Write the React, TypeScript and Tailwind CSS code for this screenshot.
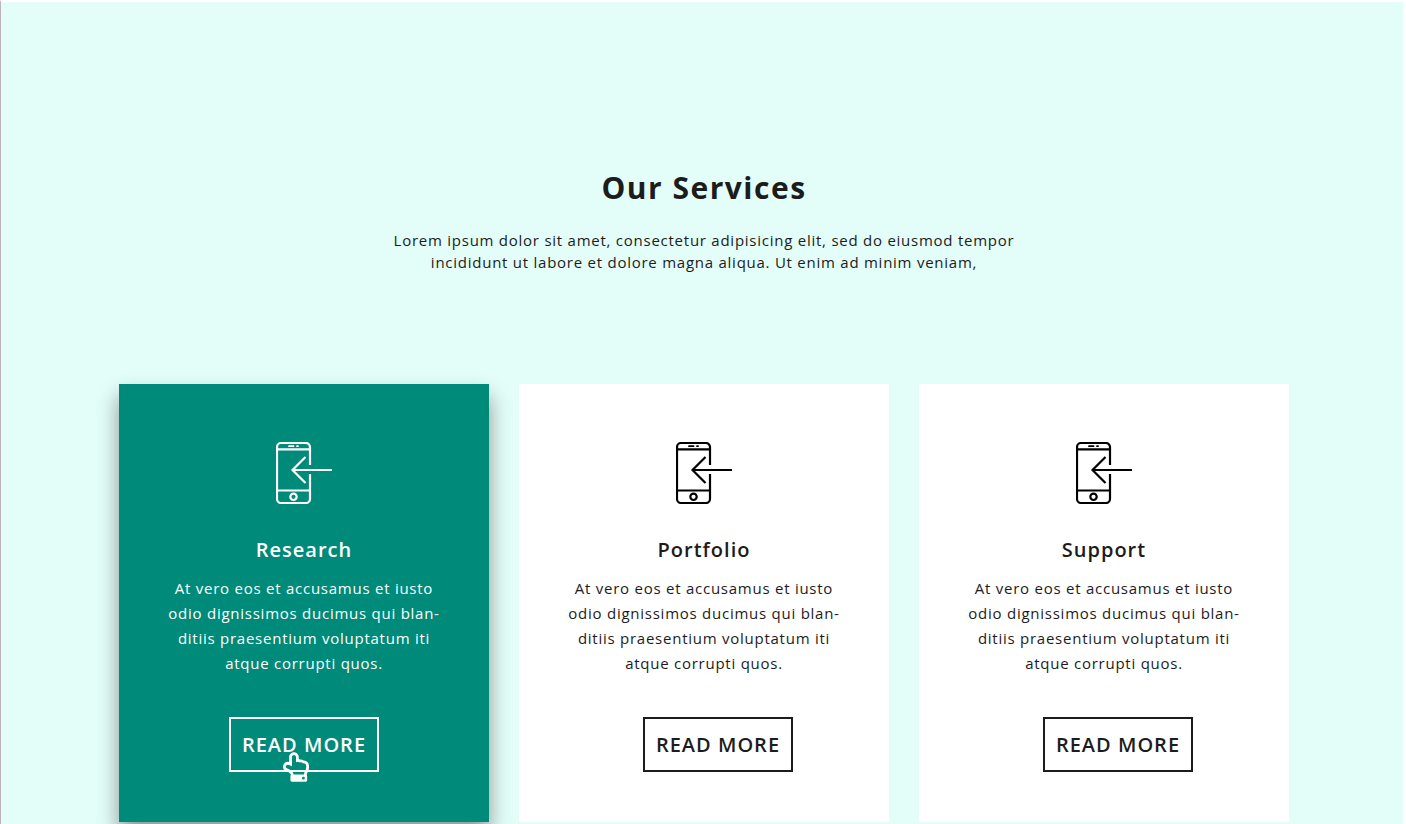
import { FaRegHandPointUp } from "react-icons/fa";

type Service = { title: string; active?: boolean };

const services: Service[] = [
  { title: "Research", active: true },
  { title: "Portfolio" },
  { title: "Support" },
];

function PhoneIcon() {
  return (
    <svg
      viewBox="0 0 56 62"
      className="h-[62px] w-14"
      fill="none"
      stroke="currentColor"
      strokeWidth="2.2"
      aria-hidden="true"
    >
      <path d="M34 23V5a4 4 0 0 0-4-4H5a4 4 0 0 0-4 4v52a4 4 0 0 0 4 4h25a4 4 0 0 0 4-4V32" />
      <path d="M1 7.300h33M1 48.500h33" />
      <path d="M13 4.200h4.500M21 4.200h1" strokeWidth="1.800" strokeLinecap="round" />
      <circle cx="17.500" cy="54.800" r="3.200" />
      <path d="M56 28H17M29.500 15 16.500 28l13 13" />
    </svg>
  );
}

function ServiceCard({ title, active }: Service) {
  return (
    <article
      className={
        active
          ? "flex flex-col items-center bg-[#008a7a] px-10 pt-[58px] pb-[50px] text-white shadow-[0_12px_20px_rgba(0,0,0,0.4)]"
          : "flex flex-col items-center bg-white px-10 pt-[58px] pb-[50px] text-[#1c1c1c]"
      }
    >
      <div className={active ? "text-white" : "text-black"}>
        <PhoneIcon />
      </div>
      <h2 className="mt-8 text-[20px] leading-7 font-semibold tracking-wider">{title}</h2>
      <p className="mt-3 text-center text-[15px] leading-[25px] tracking-wider">
        At vero eos et accusamus et iusto
        <br />
        odio dignissimos ducimus qui blan-
        <br />
        ditiis praesentium voluptatum iti
        <br />
        atque corrupti quos.
      </p>
      <div className={active ? "relative mt-[41px]" : "relative mt-[41px] ml-7"}>
        <button
          type="button"
          className="h-[55px] w-[150px] cursor-pointer border-2 border-current text-[20px] font-semibold tracking-wider whitespace-nowrap"
        >
          READ MORE
        </button>
        {active && (
          <FaRegHandPointUp
            className="pointer-events-none absolute top-[35px] left-[54px] h-[30px] w-[26px]"
            aria-hidden="true"
          />
        )}
      </div>
    </article>
  );
}

export default function App() {
  return (
    <div className="min-h-screen border-t-2 border-r-[3px] border-l border-t-white border-r-white border-l-[#bdb3b9] bg-[#e3fdf8] font-['Open_Sans',sans-serif] text-[#1c1c1c]">
      <section className="mx-auto max-w-[1174px] pt-[164px] pl-1">
        <header className="text-center">
          <h1 className="text-[30px] leading-[43px] font-bold tracking-wider">Our Services</h1>
          <p className="mt-5 text-[15px] leading-[22px] tracking-wider">
            Lorem ipsum dolor sit amet, consectetur adipisicing elit, sed do eiusmod tempor
            <br />
            incididunt ut labore et dolore magna aliqua. Ut enim ad minim veniam,
          </p>
        </header>
        <div className="mt-[111px] grid grid-cols-[repeat(auto-fit,minmax(340px,1fr))] gap-[30px]">
          {services.map((service) => (
            <ServiceCard key={service.title} {...service} />
          ))}
        </div>
      </section>
    </div>
  );
}
